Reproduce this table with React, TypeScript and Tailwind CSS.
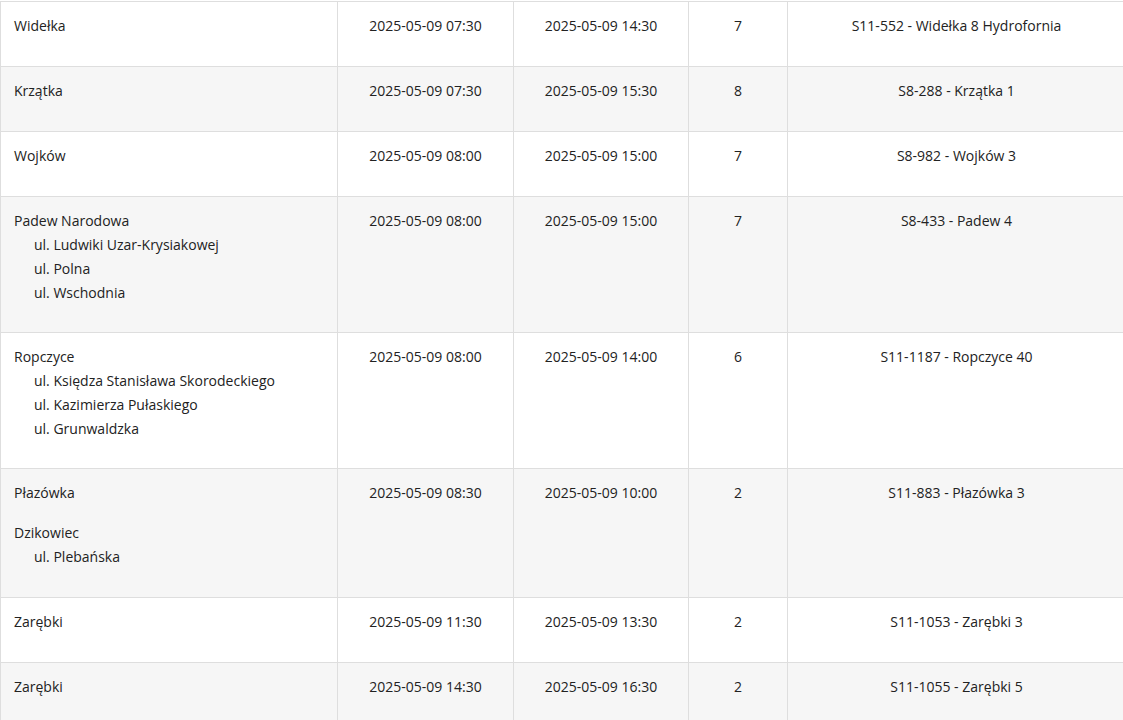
import React from 'react';

type Row = {
  place: string[][];
  start: string;
  end: string;
  count: string;
  station: string;
};

const ROWS: Row[] = [
  { place: [['Widełka']], start: '2025-05-09 07:30', end: '2025-05-09 14:30', count: '7', station: 'S11-552 - Widełka 8 Hydrofornia' },
  { place: [['Krzątka']], start: '2025-05-09 07:30', end: '2025-05-09 15:30', count: '8', station: 'S8-288 - Krzątka 1' },
  { place: [['Wojków']], start: '2025-05-09 08:00', end: '2025-05-09 15:00', count: '7', station: 'S8-982 - Wojków 3' },
  {
    place: [['Padew Narodowa', 'ul. Ludwiki Uzar-Krysiakowej', 'ul. Polna', 'ul. Wschodnia']],
    start: '2025-05-09 08:00',
    end: '2025-05-09 15:00',
    count: '7',
    station: 'S8-433 - Padew 4',
  },
  {
    place: [['Ropczyce', 'ul. Księdza Stanisława Skorodeckiego', 'ul. Kazimierza Pułaskiego', 'ul. Grunwaldzka']],
    start: '2025-05-09 08:00',
    end: '2025-05-09 14:00',
    count: '6',
    station: 'S11-1187 - Ropczyce 40',
  },
  {
    place: [['Płazówka'], ['Dzikowiec', 'ul. Plebańska']],
    start: '2025-05-09 08:30',
    end: '2025-05-09 10:00',
    count: '2',
    station: 'S11-883 - Płazówka 3',
  },
  { place: [['Zarębki']], start: '2025-05-09 11:30', end: '2025-05-09 13:30', count: '2', station: 'S11-1053 - Zarębki 3' },
  { place: [['Zarębki']], start: '2025-05-09 14:30', end: '2025-05-09 16:30', count: '2', station: 'S11-1055 - Zarębki 5' },
];

const cell = 'border border-[#dedede] align-top pt-3 pb-3';

const App: React.FC = () => {
  return (
    <div className="w-[1123px] h-[720px] overflow-hidden bg-white pt-px font-['Open_Sans','Noto_Sans',sans-serif] text-[14px] leading-6 text-[#222]">
      <table className="border-collapse table-fixed w-[1125px]">
        <colgroup>
          <col className="w-[337px]" />
          <col className="w-[176px]" />
          <col className="w-[175px]" />
          <col className="w-[99px]" />
          <col className="w-[338px]" />
        </colgroup>
        <tbody>
          {ROWS.map((row, idx) => {
            // the tall single-place rows sit one pixel shorter in the original
            const tall = row.place.length === 1 && row.place[0].length > 1;
            return (
              <tr key={idx} className={idx % 2 === 0 ? 'bg-white' : 'bg-[#f6f6f6]'}>
                <td className={`${cell} pl-[13px]`}>
                  {row.place.map((group, g) => (
                    <div key={g} className={tall ? 'mb-[15px]' : 'mb-4'}>
                      <div>{group[0]}</div>
                      {group.slice(1).map((street) => (
                        <div key={street} className="pl-5">{street}</div>
                      ))}
                    </div>
                  ))}
                </td>
                <td className={`${cell} text-center`}>
                  <div>{row.start}</div>
                </td>
                <td className={`${cell} text-center`}>
                  <div>{row.end}</div>
                </td>
                <td className={`${cell} text-center`}>
                  <div>{row.count}</div>
                </td>
                <td className={`${cell} text-center`}>
                  <div>{row.station}</div>
                </td>
              </tr>
            );
          })}
        </tbody>
      </table>
    </div>
  );
};

export default App;
